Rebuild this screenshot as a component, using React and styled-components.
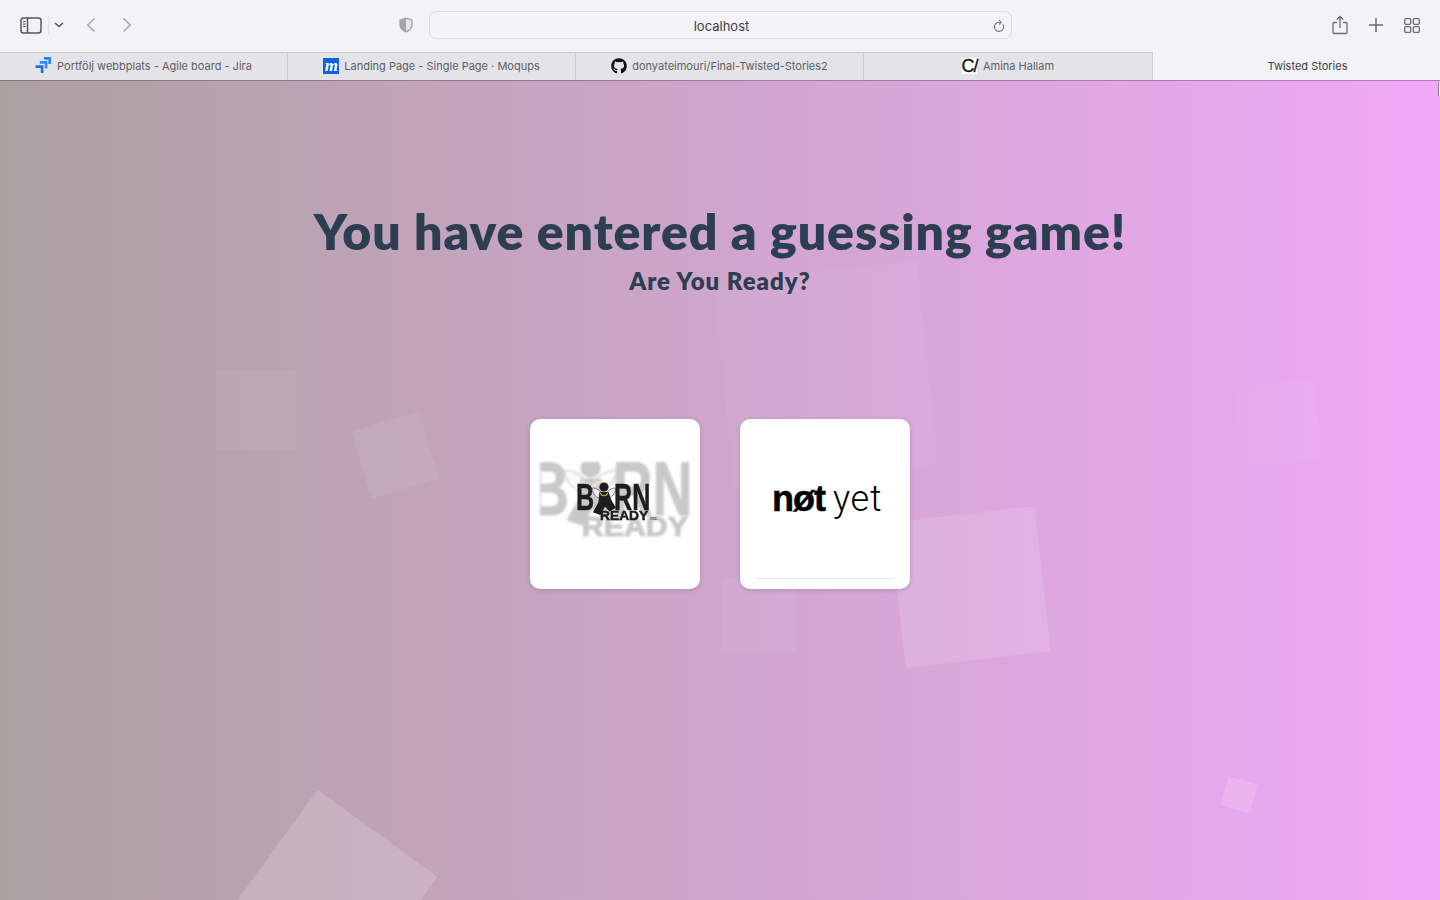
import React from 'react'
import styled, { createGlobalStyle } from 'styled-components'
import { FaGithub } from 'react-icons/fa'

const GlobalStyle = createGlobalStyle`
  html, body {
    margin: 0;
    padding: 0;
    height: 100%;
    overflow: hidden;
    background: #f2f2f7;
  }
  * { box-sizing: border-box; }
`

const squares = [
  { x: 216, y: 289, size: 80, rotate: 0, alpha: 0.05 },
  { x: 360, y: 339, size: 70, rotate: -17, alpha: 0.07 },
  { x: 723, y: 190, size: 205, rotate: -6, alpha: 0.035 },
  { x: 721, y: 496, size: 75, rotate: 0, alpha: 0.06 },
  { x: 897, y: 433, size: 146, rotate: -6.5, alpha: 0.13 },
  { x: 260, y: 738, size: 148, rotate: 36, alpha: 0.17 },
  { x: 1238, y: 302, size: 80, rotate: -6, alpha: 0.04 },
  { x: 1224, y: 699, size: 30, rotate: 16, alpha: 0.14 },
]

function JiraIcon() {
  return (
    <svg width="17" height="17" viewBox="0 0 17 17">
      <path fill="#2684ff" d="M9 0h7v7h-2.6V2.7H9z" />
      <path fill="#2f8bff" d="M4.8 4h7.6v7.4H9.8V6.7H4.8z" />
      <path fill="#1f6fe8" d="M0.6 8.2h7.8V16H5.8V10.9H0.6z" />
    </svg>
  )
}

const App = () => {
  const tabs = [
    { title: 'Portfölj webbplats - Agile board - Jira', icon: <JiraIcon /> },
    { title: 'Landing Page - Single Page · Moqups', icon: <MoqupsIcon>m</MoqupsIcon> },
    { title: 'donyateimouri/Final-Twisted-Stories2', icon: <FaGithub size={16} color="#111" /> },
    { title: 'Amina Hallam', icon: <SlashIcon>C/</SlashIcon> },
  ]

  return (
    <>
      <GlobalStyle />
      <Browser>
        <Toolbar>
          <LeftControls>
            <ToolIcon viewBox="0 0 22 17" $w={22} $h={17}>
              <rect x="1" y="1" width="20" height="15" rx="2.5" fill="none" stroke="#56565b" strokeWidth="1.5" />
              <path d="M7.5 1v15" stroke="#56565b" strokeWidth="1.5" />
              <path d="M3 4.5h2.5M3 7h2.5M3 9.5h2.5" stroke="#56565b" strokeWidth="1.2" />
            </ToolIcon>
            <Separator />
            <ToolIcon viewBox="0 0 10 6" $w={10} $h={6}>
              <path d="M1 1l4 3.5L9 1" fill="none" stroke="#56565b" strokeWidth="1.6" />
            </ToolIcon>
            <NavGroup>
              <ToolIcon viewBox="0 0 10 16" $w={10} $h={16}>
                <path d="M8.5 1.5L1.8 8l6.7 6.5" fill="none" stroke="#a9a9ae" strokeWidth="1.6" />
              </ToolIcon>
              <ToolIcon viewBox="0 0 10 16" $w={10} $h={16}>
                <path d="M1.5 1.5L8.2 8l-6.7 6.5" fill="none" stroke="#a9a9ae" strokeWidth="1.6" />
              </ToolIcon>
            </NavGroup>
            <ShieldSlot>
              <ToolIcon viewBox="0 0 14 16" $w={14} $h={16}>
                <path d="M7 .6L13.6 2.4V8c0 3.6-2.8 6.2-6.6 7.4C3.2 14.2.4 11.6.4 8V2.4z" fill="#a4a4a9" />
                <path d="M7 2L12.2 3.4V8c0 2.8-2.1 4.9-5.2 6z" fill="#e4e4e8" />
              </ToolIcon>
            </ShieldSlot>
          </LeftControls>
          <AddressBar>
            <Address>localhost</Address>
            <ReloadIcon viewBox="0 0 12 14" $w={12} $h={14}>
              <path d="M9.9 5.2A4.6 4.6 0 1 1 6 3.2h1.6" fill="none" stroke="#7d7d82" strokeWidth="1.1" />
              <path d="M6 .9l2.2 2.3L6 5.5" fill="none" stroke="#7d7d82" strokeWidth="1.1" />
            </ReloadIcon>
          </AddressBar>
          <RightControls>
            <ToolIcon viewBox="0 0 16 20" $w={16} $h={20}>
              <path d="M5 7.5H2.2a1.2 1.2 0 0 0-1.2 1.2v8.6a1.2 1.2 0 0 0 1.2 1.2h11.6a1.2 1.2 0 0 0 1.2-1.2V8.7a1.2 1.2 0 0 0-1.2-1.2H11" fill="none" stroke="#6b6b70" strokeWidth="1.3" />
              <path d="M8 13V1.5M4.8 4.5L8 1.3l3.2 3.2" fill="none" stroke="#6b6b70" strokeWidth="1.3" />
            </ToolIcon>
            <ToolIcon viewBox="0 0 14 14" $w={14} $h={14}>
              <path d="M7 0v14M0 7h14" stroke="#6b6b70" strokeWidth="1.5" />
            </ToolIcon>
            <ToolIcon viewBox="0 0 16 15" $w={16} $h={15}>
              <rect x=".7" y=".7" width="6" height="5.6" rx="1" fill="none" stroke="#6b6b70" strokeWidth="1.3" />
              <rect x="9.3" y=".7" width="6" height="5.6" rx="1" fill="none" stroke="#6b6b70" strokeWidth="1.3" />
              <rect x=".7" y="8.7" width="6" height="5.6" rx="1" fill="none" stroke="#6b6b70" strokeWidth="1.3" />
              <rect x="9.3" y="8.7" width="6" height="5.6" rx="1" fill="none" stroke="#6b6b70" strokeWidth="1.3" />
            </ToolIcon>
          </RightControls>
        </Toolbar>

        <TabBar>
          {tabs.map(t => (
            <Tab key={t.title}>
              {t.icon}
              <TabTitle>{t.title}</TabTitle>
            </Tab>
          ))}
          <ActiveTab>
            <TabTitle $active>Twisted Stories</TabTitle>
          </ActiveTab>
        </TabBar>

        <Stage>
          {squares.map(s => (
            <Square key={`${s.x}-${s.y}`} $x={s.x} $y={s.y} $size={s.size} $rotate={s.rotate} $alpha={s.alpha} />
          ))}
          <Cursor />
          <Content>
            <Title>You have entered a guessing game!</Title>
            <SubTitle>Are You Ready?</SubTitle>
            <Choices>
              <Choice>
                <BornBackdrop>
                  <BornMark />
                </BornBackdrop>
                <BornFront>
                  <BornMark />
                </BornFront>
              </Choice>
              <Choice>
                <NotYet>
                  <NotWord>nøt</NotWord>
                  <YetWord>yet</YetWord>
                </NotYet>
                <ChoiceRule />
              </Choice>
            </Choices>
          </Content>
        </Stage>
      </Browser>
    </>
  )
}

const BornMark = () => (
  <Mark>
    <MarkRow>
      <Squeezed $w={18}>B</Squeezed>
      <Angel viewBox="0 0 26 38" width="24" height="35">
        <path fill="#efefef" stroke="#444" strokeWidth=".7" d="M11 14C8 9 3 7 0 8c1 6 5 11 10 11zM15 14c3-5 8-7 11-6-1 6-5 11-10 11z" />
        <circle cx="13" cy="6.5" r="5" fill="#1f1d1d" />
        <path fill="#1f1d1d" d="M8 12h10l3 9 5 8-7 4-5-5-5 9-8-3 6-11z" />
        <path fill="none" stroke="#c9a94a" strokeWidth="1.2" d="M9 13c1 4 7 4 8 0" />
      </Angel>
      <Squeezed $w={36}>RN</Squeezed>
    </MarkRow>
    <ReadyRow>
      <Ready>READY</Ready>
      <Inc>inc.</Inc>
    </ReadyRow>
  </Mark>
)

export default App

/** browser chrome **/
const Browser = styled.div`
  width: 1440px;
  height: 900px;
  display: flex;
  flex-direction: column;
  overflow: hidden;
  font-family: Inter, "Liberation Sans", sans-serif;
`

const Toolbar = styled.header`
  height: 52px;
  flex: none;
  padding-bottom: 2px;
  display: grid;
  grid-template-columns: 429px 583px 1fr;
  align-items: center;
  background: #f2f2f7;
`

const LeftControls = styled.div`
  display: flex;
  align-items: center;
  padding-left: 20px;
`

const ToolIcon = styled.svg`
  flex: none;
  display: block;
  width: ${p => p.$w}px;
  height: ${p => p.$h}px;
`

const Separator = styled.span`
  width: 1px;
  height: 18px;
  margin: 0 5px 0 6px;
  background: #e0e0e5;
`

const NavGroup = styled.div`
  display: flex;
  align-items: center;
  gap: 26px;
  margin-left: 22px;
`

const ShieldSlot = styled.div`
  margin-left: auto;
  margin-right: 16px;
`

const AddressBar = styled.div`
  position: relative;
  height: 28px;
  padding: 2px 0 0 2px;
  display: flex;
  align-items: center;
  justify-content: center;
  border: 1px solid #dcdce2;
  border-radius: 7px;
  background: #f2f2f7;
`

const Address = styled.span`
  font-size: 13px;
  color: #3f3f43;
`

const ReloadIcon = styled(ToolIcon)`
  position: absolute;
  right: 6px;
  top: 7px;
`

const RightControls = styled.div`
  display: flex;
  align-items: center;
  justify-content: flex-end;
  gap: 21px;
  padding-right: 20px;
`

const TabBar = styled.nav`
  height: 28px;
  flex: none;
  display: flex;
`

const Tab = styled.div`
  width: 288px;
  padding-bottom: 2px;
  display: flex;
  align-items: center;
  justify-content: center;
  gap: 5px;
  background: #e3e3e8;
  border-top: 1px solid #c8c8cc;
  border-right: 1px solid #cfcfd3;

  &:nth-of-type(4) {
    width: 289px;
  }
`

const ActiveTab = styled.div`
  flex: 1;
  display: flex;
  align-items: center;
  justify-content: center;
  padding-left: 22px;
  background: #f2f2f7;
`

const TabTitle = styled.span`
  font-size: 11px;
  white-space: nowrap;
  color: ${p => (p.$active ? '#3c3c40' : '#5f5f64')};
`

const MoqupsIcon = styled.span`
  width: 16px;
  height: 16px;
  display: flex;
  align-items: center;
  justify-content: center;
  background: #0b62e4;
  color: #fff;
  font: italic 700 17px/15px "Liberation Serif", serif;
`

const SlashIcon = styled.span`
  width: 15px;
  height: 16px;
  margin-right: 1px;
  display: flex;
  align-items: center;
  justify-content: center;
  background: #fff;
  color: #111;
  font: 400 18px/16px "Liberation Sans", sans-serif;
  letter-spacing: -1px;
  -webkit-text-stroke: 0.3px #111;
`

/** page **/
const Stage = styled.main`
  position: relative;
  flex: 1;
  overflow: hidden;
  border-top: 1px solid rgba(70, 40, 70, 0.35);
  background: linear-gradient(90deg, #ada1a0 0%, #f0a9f8 100%);
`

const Square = styled.div`
  position: absolute;
  left: ${p => p.$x}px;
  top: ${p => p.$y}px;
  width: ${p => p.$size}px;
  height: ${p => p.$size}px;
  transform: rotate(${p => p.$rotate}deg);
  background: rgba(255, 255, 255, ${p => p.$alpha});
`

const Cursor = styled.span`
  position: absolute;
  right: 0;
  top: 1px;
  width: 2px;
  height: 14px;
  background: #fff;
  border-left: 1px solid #9a7a9a;
`

const Content = styled.div`
  position: relative;
  display: flex;
  flex-direction: column;
  align-items: center;
  padding-top: 120px;
  color: #2c3e50;
  font-family: Lato, "Open Sans", sans-serif;
`

const Title = styled.h1`
  margin: 0;
  font-size: 50px;
  line-height: 60px;
  font-weight: 800;
  letter-spacing: 0.9px;
`

const SubTitle = styled.h2`
  margin: 5px 0 0;
  font-size: 24px;
  line-height: 30px;
  font-weight: 800;
  letter-spacing: 0.95px;
`

const Choices = styled.div`
  display: flex;
  gap: 40px;
  margin-top: 123px;
`

const Choice = styled.div`
  position: relative;
  width: 170px;
  height: 170px;
  border-radius: 10px;
  background: #fff;
  overflow: hidden;
  box-shadow: 0 1px 4px rgba(60, 30, 60, 0.2);
`

const BornBackdrop = styled.div`
  position: absolute;
  left: 10px;
  top: 43px;
  width: 150px;
  height: 80px;
  overflow: hidden;
  opacity: 0.24;
  filter: blur(1.2px);

  & > div {
    left: -11px;
    top: 0;
    transform: scale(2.2, 2.05);
    transform-origin: 0 0;
  }
`

const BornFront = styled.div`
  position: absolute;
  left: 46px;
  top: 65px;
`

const Mark = styled.div`
  position: relative;
  width: 78px;
  color: #1f1d1d;
  font-family: "Liberation Sans", sans-serif;
  font-weight: 700;
  -webkit-text-stroke: 0.5px #1f1d1d;
`

const MarkRow = styled.div`
  display: flex;
  align-items: flex-start;
  height: 28px;
  font-size: 37px;
  line-height: 28px;
`

const Squeezed = styled.span`
  display: block;
  width: ${p => p.$w}px;
  white-space: nowrap;
  transform: scaleX(0.68);
  transform-origin: left center;
`

const Angel = styled.svg`
  flex: none;
  margin: -3px -2px 0 -2px;
`

const ReadyRow = styled.div`
  position: relative;
  display: flex;
  align-items: baseline;
  margin: -3px 0 0 24px;
`

const Ready = styled.span`
  font-size: 13.5px;
  line-height: 14px;
  transform: scaleX(1.02);
  transform-origin: left center;
`

const Inc = styled.span`
  font-size: 5px;
  margin-left: 3px;
  font-weight: 400;
  -webkit-text-stroke: 0;
`

const NotYet = styled.div`
  position: absolute;
  left: 32px;
  top: 58px;
  display: flex;
  align-items: baseline;
  gap: 8px;
  color: #000;
  font-size: 36px;
  line-height: 44px;
`

const NotWord = styled.span`
  font-family: "Liberation Sans", sans-serif;
  font-weight: 700;
  letter-spacing: -1px;
  -webkit-text-stroke: 0.5px #000;
`

const YetWord = styled.span`
  font-family: Roboto, sans-serif;
  font-weight: 300;
  letter-spacing: 0.7px;
`

const ChoiceRule = styled.span`
  position: absolute;
  left: 16px;
  right: 17px;
  bottom: 10px;
  height: 1px;
  background: #e4e4e4;
`
